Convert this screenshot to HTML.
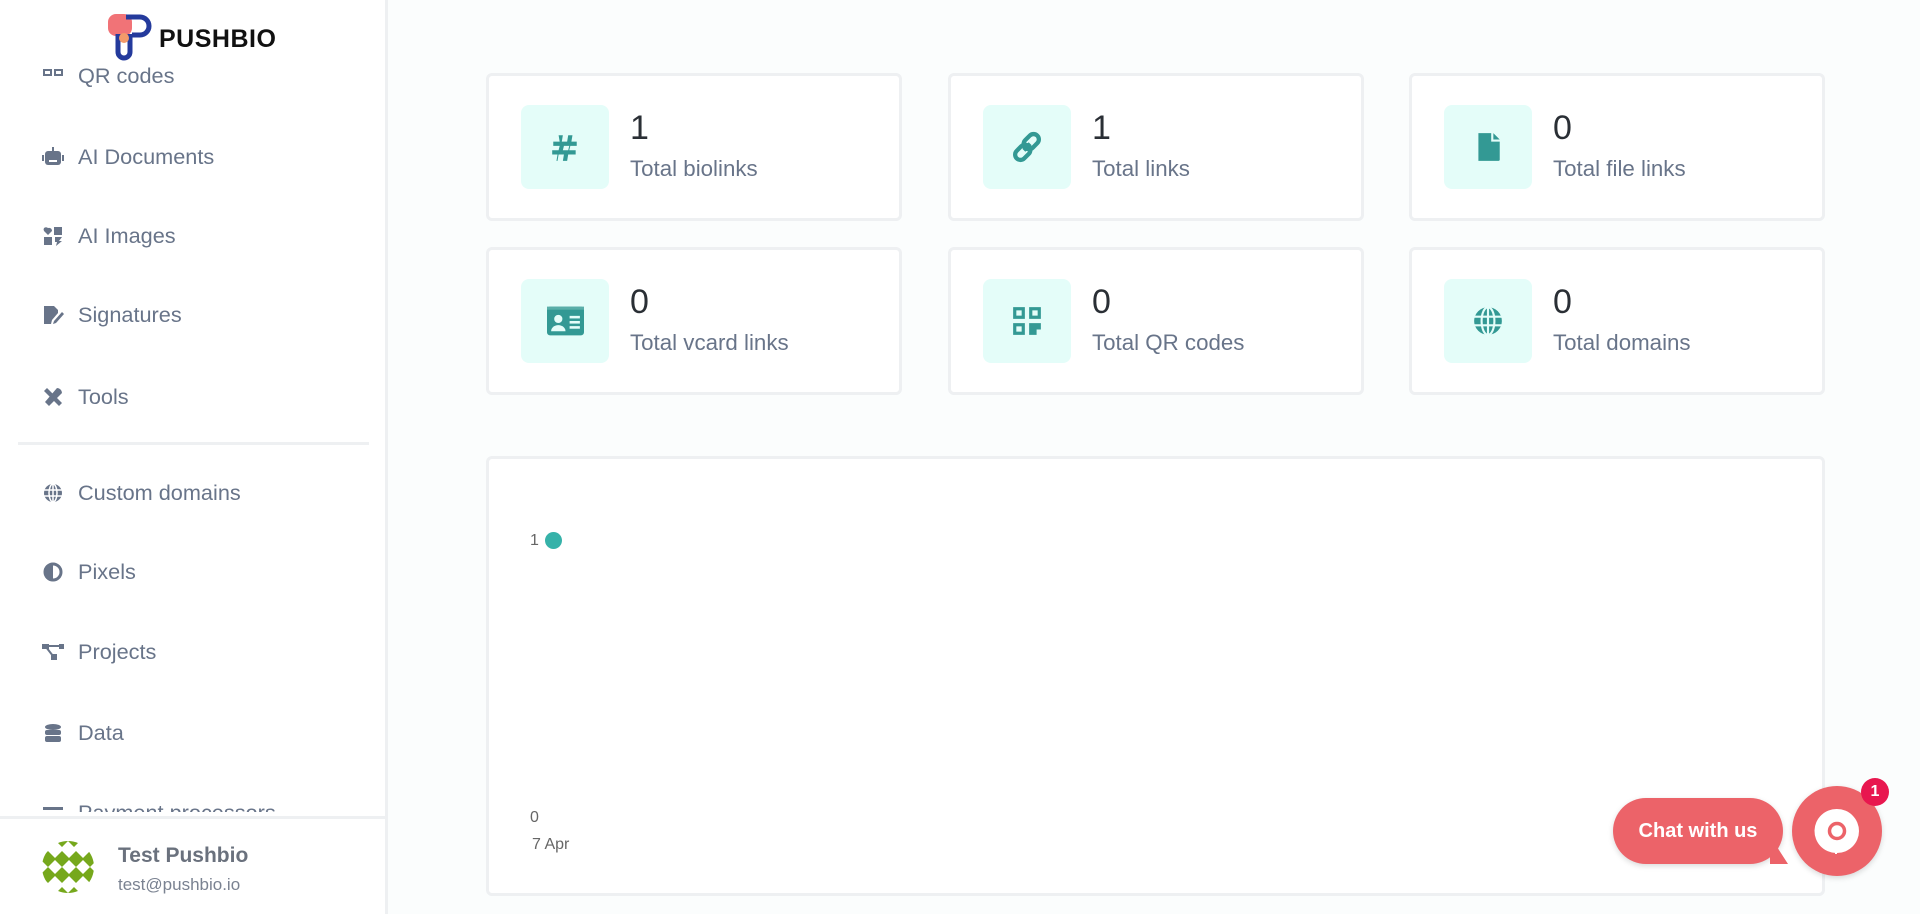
<!DOCTYPE html>
<html><head><meta charset="utf-8"><style>
*{margin:0;padding:0;box-sizing:border-box}
body{width:1920px;height:914px;overflow:hidden;background:#fbfdfd;font-family:"Liberation Sans",sans-serif;position:relative}
.side{position:absolute;left:0;top:0;width:388px;height:914px;background:#fff;border-right:3px solid #eef0f2}
.item{position:absolute;left:42px;height:30px;display:flex;align-items:center;color:#687489;font-size:21.7px}
.item svg{width:22px;height:22px;margin-right:14px;fill:#687489}
.card{position:absolute;width:416px;height:148px;background:#fff;border:3px solid #eef0f2;border-radius:6px}
.ib{position:absolute;left:32px;top:29px;width:88px;height:84px;background:#e4fdf9;border-radius:8px;display:flex;align-items:center;justify-content:center}
.ib svg{width:32px;height:32px;fill:#339994}
.num{position:absolute;left:141px;top:33px;font-size:34px;color:#2a2f35}
.lab{position:absolute;left:141px;top:80px;font-size:22.3px;color:#687489}
</style></head><body>
<div class="side">
 <svg style="position:absolute;left:106px;top:12px" width="50" height="50" viewBox="0 0 50 50">
  <rect x="2" y="2" width="24" height="22" rx="8" fill="#ef6468" opacity=".9"/>
  <path d="M20 5h14a9 9 0 0 1 0 18H26" stroke="#243a9c" stroke-width="5" fill="none"/>
  <path d="M12 22v18a6 6 0 0 0 12 0V22" stroke="#243a9c" stroke-width="5" fill="none"/>
  <circle cx="18" cy="26" r="5" fill="#f39a6a"/>
 </svg>
 <div style="position:absolute;left:159px;top:25px;font-size:25px;font-weight:bold;color:#111;letter-spacing:0.5px">PUSHBIO</div>
 <div style="position:absolute;left:0;top:62px;width:385px;height:750px;overflow:hidden">
  <div class="item" style="top:-1px"><svg viewBox="0 0 22 22"><path d="M1 4h9v7H1zM3 6v3h5V6zM12 4h9v7h-9zM14 6v3h5V6z" fill-rule="evenodd"/></svg>QR codes</div>
  <div class="item" style="top:80px"><svg viewBox="0 0 22 22"><rect x="3" y="5" width="16" height="14" rx="3"/><rect x="0" y="9" width="2" height="6"/><rect x="20" y="9" width="2" height="6"/><rect x="10" y="1" width="2" height="4"/><rect x="7" y="14" width="8" height="2" fill="#fff"/></svg>AI Documents</div>
  <div class="item" style="top:159px"><svg viewBox="0 0 22 22"><path d="M2 3a3 3 0 0 1 4 0 3 3 0 0 1 4 3l-4 4-4-4a3 3 0 0 1 0-3z"/><rect x="2" y="12" width="8" height="8"/><rect x="12" y="2" width="8" height="8"/><path d="M13 12h7l-3 4h3l-6 5 1-4h-2z"/></svg>AI Images</div>
  <div class="item" style="top:238px"><svg viewBox="0 0 22 22"><path d="M2 2h10l4 4v3l-6 7-1 4H2z"/><path d="M12 17l8-9 2 2-8 9-3 1z"/></svg>Signatures</div>
  <div class="item" style="top:320px"><svg viewBox="0 0 22 22"><path d="M2 5l3-3 15 15-3 3z"/><path d="M15 2a5 5 0 0 1 5 5l-13 13-4-4z"/></svg>Tools</div>
  <div class="item" style="top:416px"><svg viewBox="0 0 22 22"><circle cx="11" cy="11" r="9"/><path d="M2 8h18M2 14h18M11 2v18" stroke="#fff" stroke-width="1.5"/><ellipse cx="11" cy="11" rx="4" ry="9" fill="none" stroke="#fff" stroke-width="1.5"/></svg>Custom domains</div>
  <div class="item" style="top:495px"><svg viewBox="0 0 22 22"><circle cx="11" cy="11" r="8" fill="none" stroke="#687489" stroke-width="3"/><path d="M11 3a8 8 0 0 0 0 16z"/></svg>Pixels</div>
  <div class="item" style="top:575px"><svg viewBox="0 0 22 22"><rect x="0" y="3" width="7" height="5"/><rect x="17" y="3" width="5" height="5"/><rect x="9" y="13" width="6" height="6"/><path d="M4 6l7 9M6 5h12" stroke="#687489" stroke-width="2"/></svg>Projects</div>
  <div class="item" style="top:656px"><svg viewBox="0 0 22 22"><ellipse cx="11" cy="5" rx="8" ry="3"/><rect x="3" y="8" width="16" height="5" rx="2"/><rect x="3" y="14" width="16" height="6" rx="2"/></svg>Data</div>
  <div class="item" style="top:736px"><svg viewBox="0 0 22 22"><rect x="1" y="5" width="20" height="3"/><rect x="1" y="11" width="20" height="3"/></svg>Payment processors</div>
 </div>
 <div style="position:absolute;left:18px;top:442px;width:351px;height:3px;background:#eef0f2"></div>
 <div style="position:absolute;left:0;top:816px;width:385px;height:98px;background:#fff;border-top:3px solid #eef0f2">
  <svg style="position:absolute;left:42px;top:22px" width="52" height="52" viewBox="0 0 52 52"><defs><clipPath id="c"><circle cx="26" cy="26" r="26"/></clipPath></defs><g clip-path="url(#c)" fill="#76a81c"><rect width="52" height="52" fill="#fff"/><path d="M0 0h12l-6 6zM14 0h12l-6 6zM26 0h12l-6 6zM40 0h12l-6 6z"/><path d="M6 10l8 8-8 8-8-8zM20 10l8 8-8 8-8-8zM34 10l8 8-8 8-8-8zM48 10l8 8-8 8-8-8zM6 26l8 8-8 8-8-8zM20 26l8 8-8 8-8-8zM34 26l8 8-8 8-8-8zM48 26l8 8-8 8-8-8z"/><path d="M0 52h12l-6-6zM14 52h12l-6-6zM26 52h12l-6-6zM40 52h12l-6-6z"/></g></svg>
  <div style="position:absolute;left:118px;top:25px;font-size:21px;color:#5a6270;font-weight:bold;opacity:.9">Test Pushbio</div>
  <div style="position:absolute;left:118px;top:56px;font-size:17px;color:#7a8291">test@pushbio.io</div>
 </div>
</div>

<div class="card" style="left:486px;top:73px"><div class="ib"><svg viewBox="0 0 30 30"><path d="M9 4h4l-1 6h5l1-6h4l-1 6h5v4h-6l-1 4h6v4h-7l-1 6h-4l1-6h-5l-1 6H7l1-6H3v-4h6l1-4H4v-4h6zM14 14l-1 4h5l1-4z" fill-rule="evenodd"/></svg></div><div class="num">1</div><div class="lab">Total biolinks</div></div>
<div class="card" style="left:948px;top:73px"><div class="ib"><svg viewBox="0 0 30 30"><path d="M12 18l6-6" stroke="#339994" stroke-width="4" fill="none"/><rect x="14" y="2" width="10" height="16" rx="5" transform="rotate(45 19 10)" fill="none" stroke="#339994" stroke-width="4"/><rect x="6" y="12" width="10" height="16" rx="5" transform="rotate(45 11 20)" fill="none" stroke="#339994" stroke-width="4"/></svg></div><div class="num">1</div><div class="lab">Total links</div></div>
<div class="card" style="left:1409px;top:73px"><div class="ib"><svg viewBox="0 0 30 30"><path d="M6 2h12v8h8v17a1 1 0 0 1-1 1H6z"/><path d="M20 2l6 6h-6z"/></svg></div><div class="num">0</div><div class="lab">Total file links</div></div>
<div class="card" style="left:486px;top:247px"><div class="ib"><svg viewBox="0 0 36 30" style="width:37px"><rect x="0" y="1" width="36" height="28" rx="3"/><rect x="0" y="1" width="36" height="3" fill="#5aaea9"/><circle cx="11" cy="13" r="4" fill="#e4fdf9"/><path d="M4 25a7 6 0 0 1 14 0z" fill="#e4fdf9"/><rect x="22" y="10" width="10" height="2.5" fill="#e4fdf9"/><rect x="22" y="15" width="10" height="2.5" fill="#e4fdf9"/><rect x="22" y="20" width="10" height="2.5" fill="#e4fdf9"/></svg></div><div class="num">0</div><div class="lab">Total vcard links</div></div>
<div class="card" style="left:948px;top:247px"><div class="ib"><svg viewBox="0 0 30 30"><path d="M2 2h11v11H2zM5 5v5h5V5zM17 2h11v11H17zM20 5v5h5V5zM2 17h11v11H2zM5 20v5h5v-5zM17 17h11v6h-4v5h-7z" fill-rule="evenodd"/></svg></div><div class="num">0</div><div class="lab">Total QR codes</div></div>
<div class="card" style="left:1409px;top:247px"><div class="ib"><svg viewBox="0 0 30 30"><circle cx="15" cy="15" r="13"/><path d="M2 11h26M2 19h26M15 2v26" stroke="#e4fdf9" stroke-width="2"/><ellipse cx="15" cy="15" rx="6" ry="13" fill="none" stroke="#e4fdf9" stroke-width="2"/></svg></div><div class="num">0</div><div class="lab">Total domains</div></div>

<div style="position:absolute;left:486px;top:456px;width:1339px;height:440px;background:#fff;border:3px solid #eef0f2;border-radius:6px">
 <div style="position:absolute;left:41px;top:73px;font-size:16px;color:#666">1</div>
 <div style="position:absolute;left:56px;top:73px;width:17px;height:17px;border-radius:50%;background:#36b2a9"></div>
 <div style="position:absolute;left:41px;top:350px;font-size:16px;color:#666">0</div>
 <div style="position:absolute;left:43px;top:377px;font-size:16px;color:#666">7 Apr</div>
</div>

<div style="position:absolute;left:1613px;top:798px;width:170px;height:66px;background:#ec6369;border-radius:33px;color:#fff;font-weight:bold;font-size:20px;display:flex;align-items:center;justify-content:center;box-shadow:0 2px 6px rgba(0,0,0,.15)">Chat with us</div>
<div style="position:absolute;left:1770px;top:836px;width:0;height:0;border-left:18px solid #ec6369;border-top:28px solid transparent"></div>
<div style="position:absolute;left:1792px;top:786px;width:90px;height:90px;border-radius:50%;background:#ec6369;box-shadow:0 2px 6px rgba(0,0,0,.15)"></div>
<svg style="position:absolute;left:1813px;top:807px" width="48" height="48" viewBox="0 0 48 48"><path d="M24 2a22 22 0 0 1 0 44v-3H23v3A22 22 0 0 1 24 2z" fill="#fff"/><path d="M22 36v11h2v-11z" fill="#fff"/><circle cx="24" cy="24" r="7.5" fill="none" stroke="#ec6369" stroke-width="3.5"/></svg>
<div style="position:absolute;left:1861px;top:778px;width:28px;height:28px;border-radius:50%;background:#e8174f;color:#fff;font-weight:bold;font-size:16px;display:flex;align-items:center;justify-content:center">1</div>
</body></html>
